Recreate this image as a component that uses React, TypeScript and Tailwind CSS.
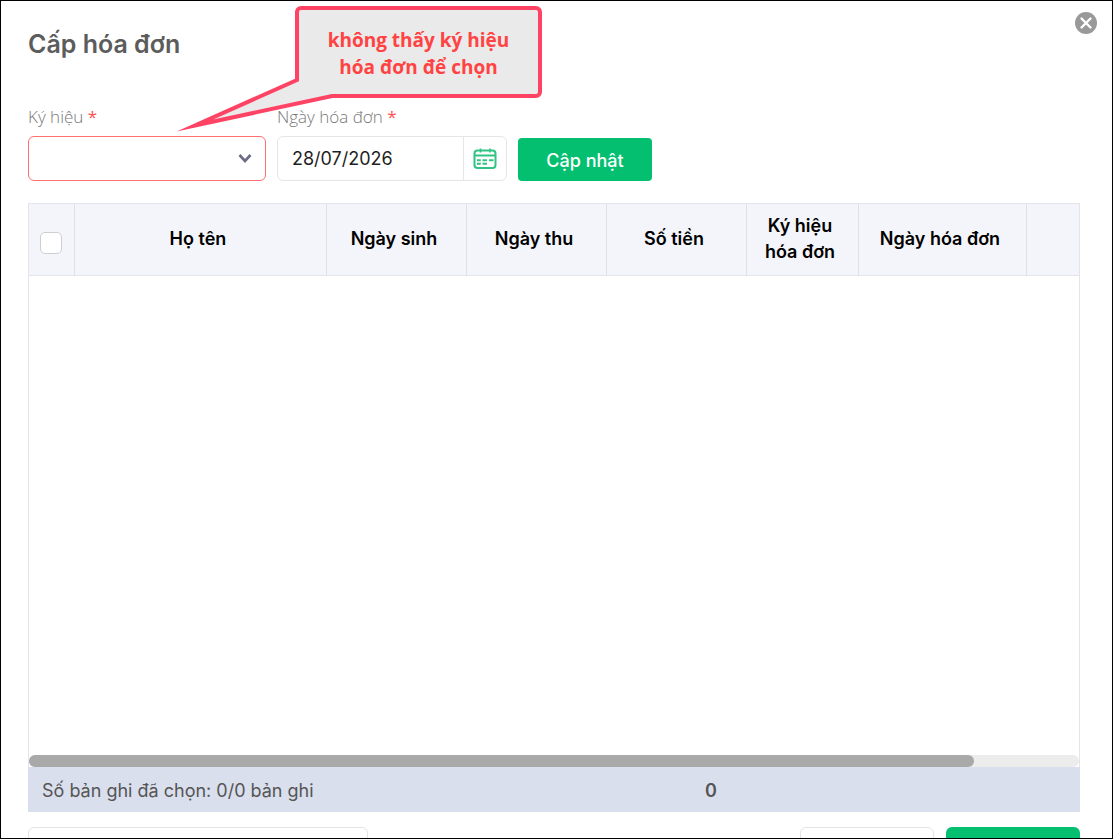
import type { ReactNode } from 'react'

interface Column {
  label: string
  width: string
}

const columns: Column[] = [
  { label: 'Họ tên', width: 'w-[252px]' },
  { label: 'Ngày sinh', width: 'w-[140px]' },
  { label: 'Ngày thu', width: 'w-[140px]' },
  { label: 'Số tiền', width: 'w-[140px]' },
  { label: 'Ký hiệu hóa đơn', width: 'w-[112px]' },
  { label: 'Ngày hóa đơn', width: 'w-[168px]' },
]

interface FieldProps {
  id: string
  label: string
  className: string
  children: ReactNode
}

function Field({ id, label, className, children }: FieldProps) {
  return (
    <div className={className}>
      <label htmlFor={id} className="block h-7 font-['Open_Sans','Noto_Sans',sans-serif] text-[17px] leading-[18px] font-light text-[#777777]">
        {label} <span className="font-normal text-[#ff5050]">*</span>
      </label>
      {children}
    </div>
  )
}

function CalendarIcon() {
  return (
    <svg width="24" height="22" viewBox="0 0 24 22" fill="none" stroke="#2fc483" strokeWidth="2" aria-hidden="true">
      <rect x="1.5" y="2.5" width="21" height="17.5" rx="3" />
      <path d="M2 7.500h20" />
      <path d="M7.500 .5v4M17 .5v4" strokeWidth="1.600" />
      <path d="M4 12.200h3.800M9.500 12.200h4.500M16 12.200h4.500M4 15.800h3.800M9.500 15.800h4.500" />
    </svg>
  )
}

function Callout() {
  return (
    <div className="pointer-events-none absolute top-0 left-0 z-10">
      <svg width="550" height="136" viewBox="0 0 550 136" aria-hidden="true">
        <path
          d="M300 7H535a4 4 0 0 1 4 4V91a4 4 0 0 1-4 4H331L194 124.500L296 79V11a4 4 0 0 1 4-4Z"
          fill="#eaeaea"
          stroke="#ff4365"
          strokeWidth="4"
          strokeMiterlimit="14"
        />
      </svg>
      <p className="absolute top-[26px] left-[296px] w-[243px] px-6 text-center font-['Open_Sans','Noto_Sans',sans-serif] text-[19px] leading-[27px] font-bold text-[#ff4343]">
        không thấy ký hiệu hóa đơn để chọn
      </p>
    </div>
  )
}

export default function App() {
  return (
    <div className="relative h-screen overflow-hidden border border-black bg-white pr-8 pl-[27px] font-['Inter',sans-serif] text-lg text-[#1f1f1f]">
      <button type="button" aria-label="Đóng" className="absolute top-[11px] right-[15px]">
        <svg width="22" height="22" viewBox="0 0 22 22" aria-hidden="true">
          <circle cx="11" cy="11" r="11" fill="#999999" />
          <path d="M6.500 6.500l9 9M15.500 6.500l-9 9" stroke="#fff" strokeWidth="2.400" strokeLinecap="round" />
        </svg>
      </button>

      <h1 className="pt-[27px] text-[25px] leading-8 font-semibold text-[#5c5c5c]">Cấp hóa đơn</h1>

      <form className="flex items-end gap-[11px] pt-12" onSubmit={(e) => e.preventDefault()}>
        <Field id="symbol" label="Ký hiệu" className="w-[238px]">
          <div className="relative">
            <select id="symbol" className="block h-[45px] w-full appearance-none rounded-md border border-[#ff6f6f] bg-white px-3 outline-none">
              <option value=""></option>
            </select>
            <svg className="pointer-events-none absolute top-[17px] right-3.5" width="14" height="11" viewBox="0 0 14 11" fill="none" stroke="#6b6b85" strokeWidth="2.600" aria-hidden="true">
              <path d="M1.500 2L7 8L12.500 2" />
            </svg>
          </div>
        </Field>
        <Field id="date" label="Ngày hóa đơn" className="w-[230px]">
          <div className="flex h-[45px] rounded-md border border-[#e6e6e6]">
            <input id="date" type="text" defaultValue="28/07/2026" className="min-w-0 flex-1 px-3.5 outline-none" />
            <button type="button" aria-label="Chọn ngày" className="flex w-[43px] items-center justify-center border-l border-[#e6e6e6]">
              <CalendarIcon />
            </button>
          </div>
        </Field>
        <button type="submit" className="h-[43px] w-[134px] rounded bg-[#05bf71] pt-0.5 font-medium text-white">
          Cập nhật
        </button>
      </form>

      <div className="mt-[22px] border border-b-0 border-[#e4e5ec]">
        <div className="h-[calc(100vh-288px)] overflow-hidden">
          <table className="w-full table-fixed border-collapse">
            <thead>
              <tr className="h-[71px] border-b border-[#e4e5ec] bg-[#f4f5fa] text-black">
                <th className="w-[45px] border-r border-[#dfe0ea]">
                  <input
                    type="checkbox"
                    aria-label="Chọn tất cả"
                    className="mx-auto mt-2 block size-[22px] appearance-none rounded-[5px] border border-[#cfcfcf] bg-white"
                  />
                </th>
                {columns.map((column) => (
                  <th key={column.label} className={`${column.width} border-r border-[#dfe0ea] pr-4 pl-3 text-lg leading-[26px] font-semibold`}>
                    {column.label}
                  </th>
                ))}
                <th></th>
              </tr>
            </thead>
            <tbody></tbody>
          </table>
        </div>
        <div className="h-3 rounded-full bg-[#ececec]">
          <div className="h-full w-9/10 rounded-full bg-[#a9a9a9]" />
        </div>
      </div>

      <div className="flex h-[45px] items-center bg-[#d9dfed] pt-0.5 pl-3.5 text-[#555555]">
        <span className="w-[663px]">Số bản ghi đã chọn: 0/0 bản ghi</span>
        <span className="font-semibold">0</span>
      </div>

      <div className="flex gap-3 pt-[15px]">
        <input type="text" aria-label="Ghi chú" className="h-[43px] w-[340px] rounded-md border border-[#e4e4e4]" />
        <button type="button" aria-label="Hủy" className="ml-auto h-[43px] w-[134px] rounded-md border border-[#e4e4e4]" />
        <button type="button" aria-label="Lưu" className="h-[43px] w-[134px] rounded-md bg-[#05bf71]" />
      </div>

      <Callout />
    </div>
  )
}
